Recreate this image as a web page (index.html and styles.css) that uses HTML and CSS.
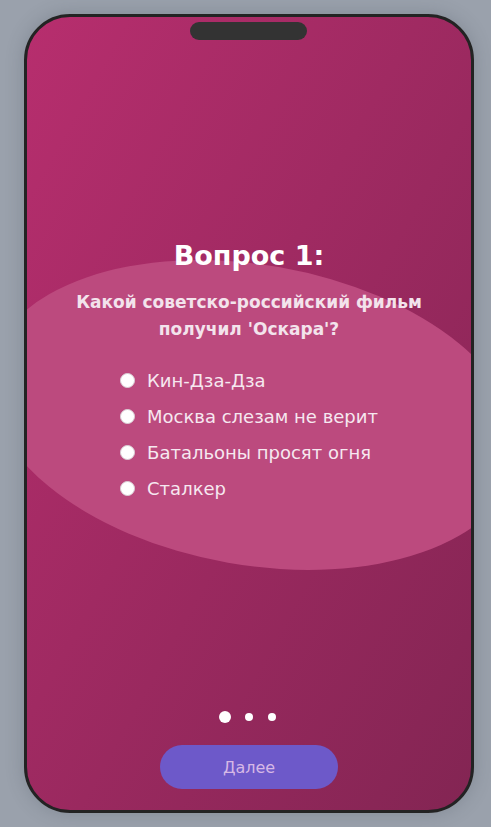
FILE: index.html
```html
<!DOCTYPE html>
<html lang="ru">
<head>
<meta charset="utf-8">
<title>Квиз</title>
<link rel="stylesheet" href="styles.css">
</head>
<body>
<div class="phone">
  <div class="notch"></div>
  <div class="blob"></div>
  <div class="screen">
    <div class="quiz">
      <h1 class="title">Вопрос 1:</h1>
      <p class="question">Какой советско-российский фильм<br>получил 'Оскара'?</p>
      <ul class="options">
        <li class="option"><span class="radio"></span><span class="label">Кин-Дза-Дза</span></li>
        <li class="option"><span class="radio"></span><span class="label">Москва слезам не верит</span></li>
        <li class="option"><span class="radio"></span><span class="label">Батальоны просят огня</span></li>
        <li class="option"><span class="radio"></span><span class="label">Сталкер</span></li>
      </ul>
    </div>
    <div class="footer">
      <div class="dots">
        <span class="dot dot-active"></span>
        <span class="dot"></span>
        <span class="dot"></span>
      </div>
      <button class="next">Далее</button>
    </div>
  </div>
</div>
</body>
</html>
```
FILE: styles.css
```css
* { box-sizing: border-box; }
html, body { margin: 0; padding: 0; }
body {
  background: #9aa1ac;
  font-family: "DejaVu Sans", "Noto Sans", sans-serif;
  padding-top: 14px;
  height: 827px;
  overflow: hidden;
}
.phone {
  position: relative;
  width: 450px;
  height: 799px;
  margin-left: 24px;
  border: 3px solid #232323;
  border-radius: 46px;
  background: linear-gradient(to bottom right, #b72e6e, #832553);
  overflow: hidden;
  box-shadow: 0 0 18px rgba(60, 66, 80, 0.25);
}
.notch {
  position: absolute;
  top: 5px;
  left: 163px;
  width: 117px;
  height: 18px;
  border-radius: 9px;
  background: #333333;
  z-index: 2;
}
.blob {
  position: absolute;
  left: -41px;
  top: 248px;
  width: 536px;
  height: 300px;
  border-radius: 50%;
  background: #bc4a7e;
  transform: rotate(10deg);
}
.screen {
  position: relative;
  z-index: 1;
  height: 100%;
  display: flex;
  flex-direction: column;
  padding: 219px 0 21px;
}
.quiz {
  display: flex;
  flex-direction: column;
  align-items: center;
}
.title {
  margin: 0;
  color: #ffffff;
  font-size: 27px;
  font-weight: 700;
  line-height: 40px;
}
.question {
  margin: 13px 0 0;
  text-align: center;
  color: #f3e3ec;
  font-size: 17px;
  font-weight: 700;
  line-height: 27px;
}
.options {
  list-style: none;
  margin: 25px 0 0;
  padding: 0;
  display: flex;
  flex-direction: column;
  gap: 12px;
}
.option {
  display: flex;
  align-items: center;
  gap: 12px;
  height: 24px;
  color: #f6e8f0;
  font-size: 18px;
}
.radio {
  width: 15px;
  height: 15px;
  border-radius: 50%;
  background: #ffffff;
  border: 1px solid #d9d0d6;
  flex: none;
}
.footer {
  margin-top: auto;
  display: flex;
  flex-direction: column;
  align-items: center;
}
.dots {
  display: flex;
  align-items: center;
  gap: 15px;
  height: 12px;
  margin-right: 3px;
}
.dot {
  width: 8px;
  height: 8px;
  border-radius: 50%;
  background: #ffffff;
}
.dot-active {
  width: 12px;
  height: 12px;
  margin-right: -1px;
}
.next {
  margin-top: 22px;
  width: 178px;
  height: 44px;
  border: none;
  border-radius: 22px;
  background: #6d59c9;
  color: #d6b8e6;
  font-family: "DejaVu Sans", "Noto Sans", sans-serif;
  font-size: 16px;
}
```
